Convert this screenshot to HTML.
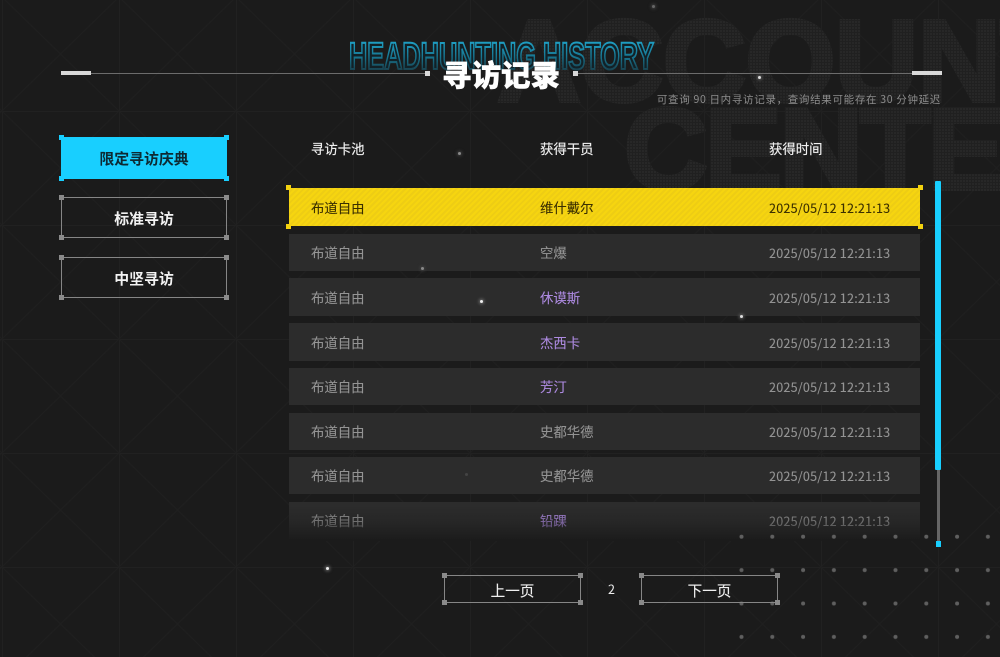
<!DOCTYPE html>
<html lang="zh">
<head>
<meta charset="utf-8">
<title>寻访记录</title>
<style>
*{box-sizing:border-box;margin:0;padding:0}
html,body{width:1000px;height:657px;overflow:hidden;background:#1b1b1b}
body{position:relative;font-family:"Noto Sans CJK SC","Liberation Sans",sans-serif;color:#fff}
svg.bg{position:absolute;left:0;top:0}
.bar{position:absolute;background:#d8d8d8}
.ln{position:absolute;height:1px;background:#6c6c6c;top:73px}
.title{position:absolute;left:442px;top:53px;font-size:29.5px;line-height:42px;font-weight:900;color:#fff;-webkit-text-stroke:.5px #fff;white-space:nowrap}
.sub{position:absolute;right:59px;top:92px;font-size:10.5px;line-height:16px;color:#8d8d8d;letter-spacing:.68px;white-space:nowrap}
.th{position:absolute;top:138px;font-size:13.4px;line-height:20px;color:#f0f0f0;white-space:nowrap;-webkit-text-stroke:.15px #f0f0f0}
.side{position:absolute;left:61px;width:166px;border:1px solid #868686;text-align:center;font-size:14.9px;font-weight:700;color:#f2f2f2}
.c{position:absolute;width:5px;height:5px;background:#8a8a8a}
.tl{left:-3px;top:-3px}.tr{right:-3px;top:-3px}.bl{left:-3px;bottom:-3px}.br{right:-3px;bottom:-3px}
.side.on{background:#18cfff;border-color:#18cfff;color:#0d2a33}
.side.on .c{background:#18cfff}
.row{position:absolute;left:289px;width:631px;height:37px;background:#2c2c2c;font-size:13.4px;line-height:37px;color:#949494;-webkit-text-stroke:.1px currentColor}
.row span{position:absolute;top:0;white-space:nowrap}
.row .a{left:22px}.row .b{left:251px}.row .t{left:480px;font-size:12.6px;letter-spacing:.2px}
.row .p{color:#ad8ae0}
.row.y{height:38px;top:188px;line-height:39px;background:repeating-linear-gradient(135deg,#f6d510 0 2px,#eecd14 2px 4px);color:#3a2f00}
.row.y .c{background:#f3d20f}
.fade{position:absolute;left:280px;top:505px;width:650px;height:36px;background:linear-gradient(to bottom,rgba(27,27,27,0),rgba(27,27,27,.3) 45%,rgba(27,27,27,.92) 95%)}
.sb{position:absolute;left:935px;top:181px;width:6px;height:289px;background:#18cfff;border-radius:1px}
.st{position:absolute;left:937px;top:470px;width:3px;height:71px;background:#666}
.se{position:absolute;left:936px;top:541px;width:5px;height:6px;background:#18cfff}
.pg{position:absolute;top:575px;width:137px;height:28px;border:1px solid #868686;text-align:center;font-size:14.6px;line-height:29px;color:#efefef;-webkit-text-stroke:.1px #efefef}
.num{position:absolute;left:608px;top:581px;font-size:12.5px;line-height:16px;color:#eee}
.s{position:absolute;border-radius:50%}
svg.dots{position:absolute;left:726px;top:520px}
</style>
</head>
<body>
<svg class="bg" width="1000" height="657" viewBox="0 0 1000 657">
  <defs>
    <pattern id="g" x="2" y="-3" width="117" height="114" patternUnits="userSpaceOnUse">
      <path d="M0 0V114M0 0H117" stroke="#212121" stroke-width="2" fill="none"/>
      <path d="M0 0L117 114M117 0L0 114" stroke="#1f1f1f" stroke-width="1" fill="none"/>
    </pattern>
    <pattern id="d" x="0" y="0" width="3" height="3" patternUnits="userSpaceOnUse">
      <rect width="3" height="3" fill="#202020"/>
      <rect width="2" height="2" fill="#272727"/>
    </pattern>
    <linearGradient id="tg" x1="0" y1="0" x2="0" y2="1">
      <stop offset="0" stop-color="#22aed6"/>
      <stop offset=".5" stop-color="#177590"/>
      <stop offset="1" stop-color="#1a2429"/>
    </linearGradient>
  </defs>
  <rect width="1000" height="657" fill="#1b1b1b"/>
  <rect width="1000" height="657" fill="url(#g)"/>
  <g font-family="Liberation Sans" font-weight="700" font-size="116" fill="url(#d)" stroke="url(#d)" stroke-width="4" stroke-linejoin="miter">
    <text x="497" y="101" letter-spacing="-1">ACCOUNT</text>
    <text x="624" y="189" letter-spacing="-3">CENTER</text>
  </g>
  <text x="349" y="69" font-family="Liberation Sans" font-weight="700" font-size="38" textLength="305" lengthAdjust="spacingAndGlyphs" fill="#122127" stroke="url(#tg)" stroke-width="2.1">HEADHUNTING HISTORY</text>
</svg>

<div class="bar" style="left:61px;top:71px;width:30px;height:4px"></div>
<div class="ln" style="left:91px;width:334px"></div>
<div class="bar" style="left:425px;top:71px;width:5px;height:5px"></div>
<div class="bar" style="left:573px;top:71px;width:5px;height:5px"></div>
<div class="ln" style="left:578px;width:334px"></div>
<div class="bar" style="left:912px;top:71px;width:30px;height:4px"></div>
<div class="title">寻访记录</div>
<div class="sub">可查询 90 日内寻访记录，查询结果可能存在 30 分钟延迟</div>

<div class="side on" style="top:137px;height:42px;line-height:42px">限定寻访庆典<i class="c tl"></i><i class="c tr"></i><i class="c bl"></i><i class="c br"></i></div>
<div class="side" style="top:197px;height:41px;line-height:41px">标准寻访<i class="c tl"></i><i class="c tr"></i><i class="c bl"></i><i class="c br"></i></div>
<div class="side" style="top:257px;height:41px;line-height:41px">中坚寻访<i class="c tl"></i><i class="c tr"></i><i class="c bl"></i><i class="c br"></i></div>

<div class="th" style="left:311px">寻访卡池</div>
<div class="th" style="left:540px">获得干员</div>
<div class="th" style="left:769px">获得时间</div>

<div class="row y"><span class="a">布道自由</span><span class="b">维什戴尔</span><span class="t">2025/05/12 12:21:13</span><i class="c tl"></i><i class="c tr"></i><i class="c bl"></i><i class="c br"></i></div>
<div class="row" style="top:234px"><span class="a">布道自由</span><span class="b">空爆</span><span class="t">2025/05/12 12:21:13</span></div>
<div class="row" style="top:278px;height:38px;line-height:39px"><span class="a">布道自由</span><span class="b p">休谟斯</span><span class="t">2025/05/12 12:21:13</span></div>
<div class="row" style="top:323px;height:38px;line-height:39px"><span class="a">布道自由</span><span class="b p">杰西卡</span><span class="t">2025/05/12 12:21:13</span></div>
<div class="row" style="top:368px"><span class="a">布道自由</span><span class="b p">芳汀</span><span class="t">2025/05/12 12:21:13</span></div>
<div class="row" style="top:413px"><span class="a">布道自由</span><span class="b">史都华德</span><span class="t">2025/05/12 12:21:13</span></div>
<div class="row" style="top:457px"><span class="a">布道自由</span><span class="b">史都华德</span><span class="t">2025/05/12 12:21:13</span></div>
<div class="row" style="top:502px"><span class="a">布道自由</span><span class="b p">铅踝</span><span class="t">2025/05/12 12:21:13</span></div>
<div class="fade"></div>

<svg class="dots" width="274" height="134">
  <defs>
    <pattern id="dp" x="0" y="0" width="30.8" height="33.4" patternUnits="userSpaceOnUse">
      <circle cx="15.5" cy="16.7" r="2" fill="#5f5f5f"/>
    </pattern>
  </defs>
  <rect width="274" height="134" fill="url(#dp)"/>
</svg>

<div class="st"></div><div class="sb"></div><div class="se"></div>

<div class="pg" style="left:444px">上一页<i class="c tl"></i><i class="c tr"></i><i class="c bl"></i><i class="c br"></i></div>
<div class="num">2</div>
<div class="pg" style="left:641px;width:137px">下一页<i class="c tl"></i><i class="c tr"></i><i class="c bl"></i><i class="c br"></i></div>

<div class="s" style="left:652px;top:5px;width:3px;height:3px;background:#666;box-shadow:0 0 3px 1px #444"></div>
<div class="s" style="left:758px;top:76px;width:3px;height:3px;background:#ddd;box-shadow:0 0 3px 1px #666"></div>
<div class="s" style="left:458px;top:152px;width:3px;height:3px;background:#888;box-shadow:0 0 3px 1px #444"></div>
<div class="s" style="left:421px;top:267px;width:3px;height:3px;background:#888;box-shadow:0 0 3px 1px #444"></div>
<div class="s" style="left:480px;top:300px;width:3px;height:3px;background:#eee;box-shadow:0 0 3px 1px #777"></div>
<div class="s" style="left:740px;top:315px;width:3px;height:3px;background:#ddd;box-shadow:0 0 3px 1px #666"></div>
<div class="s" style="left:465px;top:473px;width:3px;height:3px;background:#444"></div>
<div class="s" style="left:326px;top:567px;width:3px;height:3px;background:#eee;box-shadow:0 0 3px 1px #777"></div>
</body>
</html>
